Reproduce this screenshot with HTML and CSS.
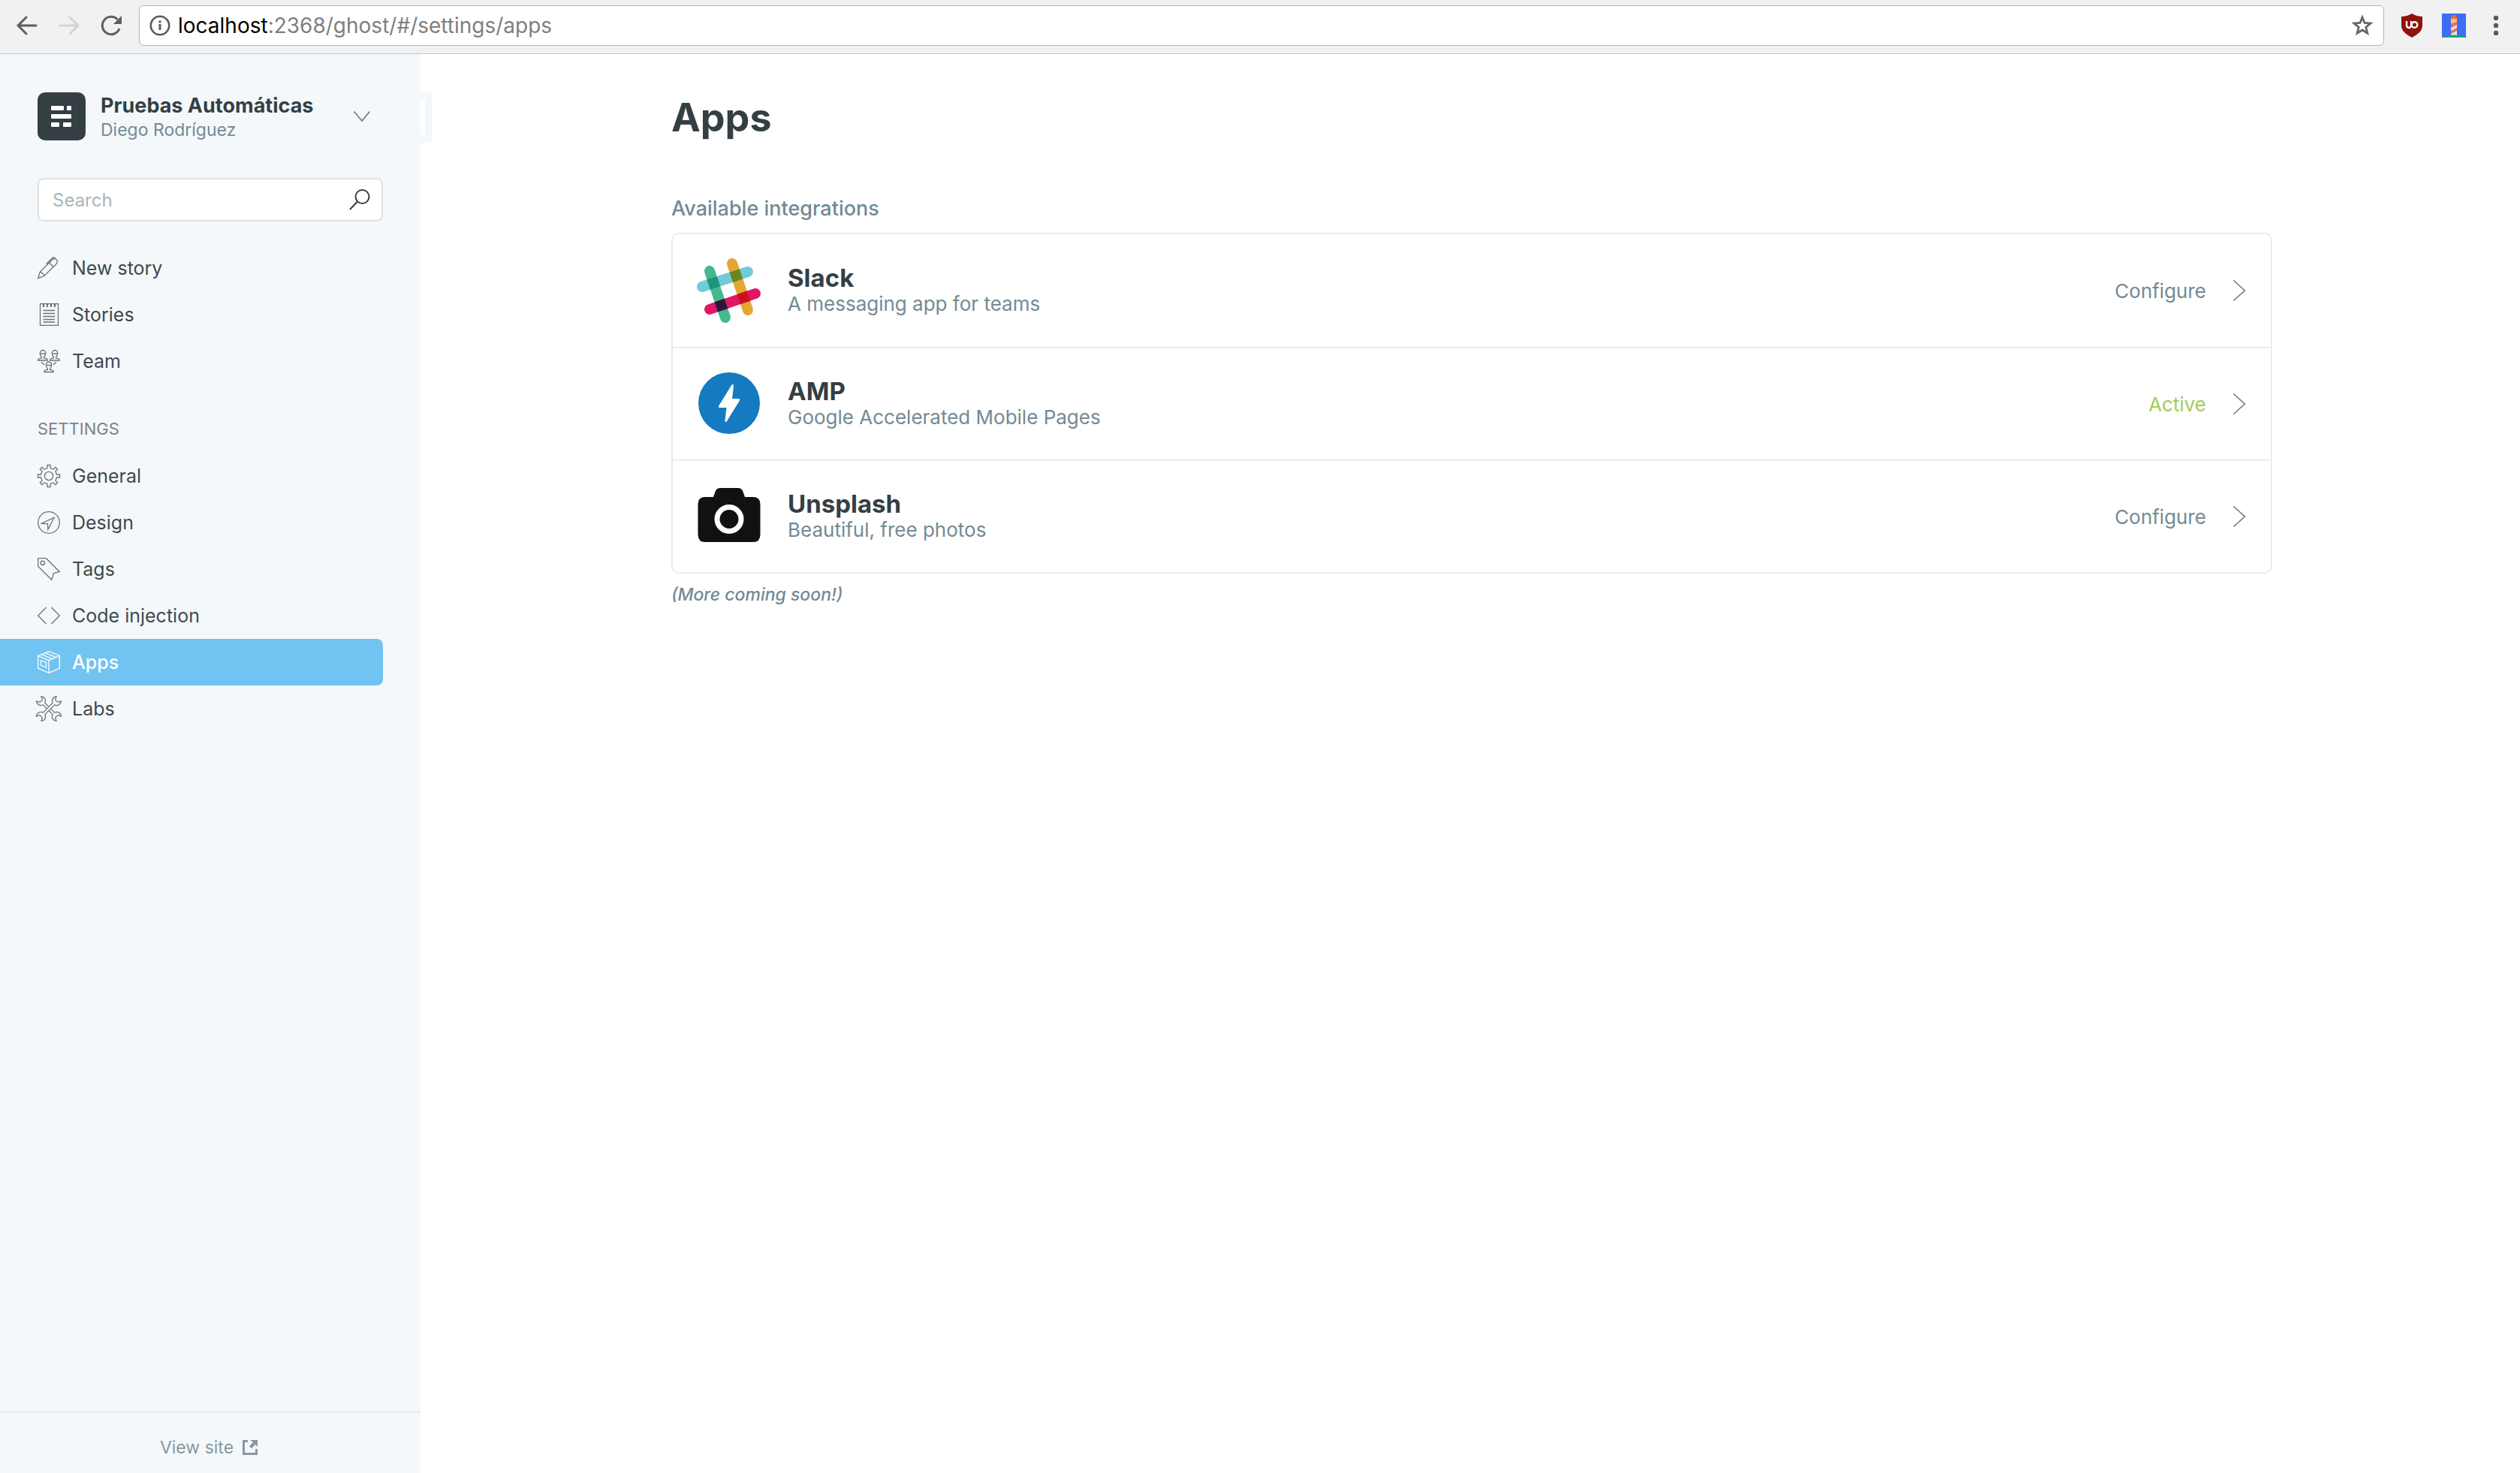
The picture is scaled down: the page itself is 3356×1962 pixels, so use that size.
FILE: index.html
```html
<!DOCTYPE html>
<html lang="en">
<head>
<meta charset="utf-8">
<meta name="viewport" content="width=device-width, initial-scale=1">
<title>Apps - Settings - Pruebas Automáticas</title>
<link rel="stylesheet" href="styles.css">
</head>
<body>
<header class="toolbar">
  <div class="history">
    <button class="tool" type="button" aria-label="Back"><svg width="28" height="28" viewBox="0 0 28 28" class="line-tool"><path d="M26 14H2M13 3 2 14l11 11"/></svg></button>
    <button class="tool" type="button" aria-label="Forward" disabled><svg width="28" height="28" viewBox="0 0 28 28" class="line-tool"><path d="M2 14h24M15 3l11 11-11 11"/></svg></button>
    <button class="tool" type="button" aria-label="Reload"><svg width="28" height="28" viewBox="0 0 28 28"><path d="M25 18A11.700 11.700 0 1 1 22.500 6" fill="none" stroke="#5f5f5f" stroke-width="3"/><path d="M28 1v11H17z" fill="#5f5f5f"/></svg></button>
  </div>
  <div class="address">
    <svg width="28" height="28" viewBox="0 0 28 28"><circle cx="14" cy="14" r="12.200" fill="none" stroke="#5a5a5a" stroke-width="2.600"/><path d="M12.500 12h3v8h-3zM12.500 7.500h3v3h-3z" fill="#5a5a5a"/></svg>
    <div class="url"><span class="host">localhost</span>:2368/ghost/#/settings/apps</div>
    <button class="tool" type="button" aria-label="Bookmark this page"><svg width="30" height="30" viewBox="0 0 30 30"><path d="M15 4l3 7.500 8 .6-6.200 5.200 2 8L15 21l-6.800 4.300 2-8L4 12.100l8-.6z" fill="none" stroke="#666" stroke-width="2.800"/></svg></button>
  </div>
  <div class="extensions">
    <button class="tool" type="button" aria-label="uBlock Origin"><svg width="28" height="32" viewBox="0 0 28 32"><path d="M14 0q6 4 14 4v12c0 8-7 12-14 16C7 28 0 24 0 16V4q8 0 14-4z" fill="#8f120b"/><path d="M7 10v6a3 3 0 0 0 6 0v-6" fill="none" stroke="#fff" stroke-width="2.400"/><circle cx="17.500" cy="15" r="3.800" fill="none" stroke="#fff" stroke-width="2.400"/></svg></button>
    <button class="tool" type="button" aria-label="Lighthouse"><svg width="32" height="32" viewBox="0 0 32 32"><path d="M0 0h32v32H0z" fill="#3d6df5"/><path d="M12 9h8v20h-8z" fill="#dcdff0"/><path d="M12 7q0-5 4-5t4 5z" fill="#ee6a3a"/><path d="M12 7h8v4h-8z" fill="#ffc04d"/><path d="M12 13l8-2v4l-8 4zM12 23l8-4v4l-8 4z" fill="#f0704a"/><path d="M0 32q16-7 32 0z" fill="#17a765"/></svg></button>
    <button class="tool menu" type="button" aria-label="Menu"><svg width="8" height="32" viewBox="0 0 8 32" fill="#5a5a5a"><circle cx="4" cy="6" r="3.200"/><circle cx="4" cy="16" r="3.200"/><circle cx="4" cy="26" r="3.200"/></svg></button>
  </div>
</header>

<div class="app">
  <nav class="sidebar" aria-label="Main">
    <button class="brand" type="button">
      <svg width="64" height="64" viewBox="0 0 64 64"><rect width="64" height="64" rx="10" fill="#343f44"/><g fill="#fff"><rect x="18" y="18" width="17" height="6" rx="1"/><rect x="39" y="18" width="6" height="6" rx="1"/><rect x="18" y="29" width="27" height="6" rx="1"/><rect x="18" y="40" width="11" height="6" rx="1"/><rect x="34" y="40" width="11" height="6" rx="1"/></g></svg>
      <span class="brand-text"><span class="brand-title">Pruebas Automáticas</span><span class="brand-user">Diego Rodríguez</span></span>
      <svg width="22" height="14" viewBox="0 0 22 14" class="thin"><path d="M.5.500 11 13 21.500.500"/></svg>
    </button>

    <div class="search">
      <input type="search" placeholder="Search" aria-label="Search">
      <svg width="28" height="28" viewBox="0 0 28 28" fill="none" stroke="#343f44" stroke-width="2"><circle cx="17.500" cy="10" r="9"/><path d="M11 16.500 1 27"/></svg>
    </div>

    <ul class="menu-list">
      <li><a href="#/editor"><svg class="icon" width="30" height="30" viewBox="0 0 30 30"><path d="M.7 28.700 3.200 20.300 18.500 5Q22.500 1 25.200 3.800T24.500 10L9 25.500zM3.200 20.300Q7.500 21 9 25.500M15.500 8l5.800 5.500M11.500 9.800 19.500 1.700Q21.500 0 24 2.500"/></svg>New story</a></li>
      <li><a href="#/stories"><svg class="icon" width="30" height="30" viewBox="0 0 30 30"><path d="M3.500.600h24v28.800h-24zM7.500 9.500h15.500M7.500 13.500h15.500M7.500 17.500h15.500M7.500 21.500h15.500M7.500 25h15.500"/><path d="M8 1v4M13 1v4M18 1v4M23 1v4" stroke-width="2.200"/></svg>Stories</a></li>
      <li><a href="#/team"><svg class="icon" width="30" height="30" viewBox="0 0 30 30"><defs><g id="person"><path d="M-3.700 4a3.700 4 0 1 1 7.400 0c0 2-1 4-2 4.600v1.900q5 .5 4.700 3H-6.400q-.3-2.500 4.700-3V8.600C-2.700 8-3.700 6-3.700 4zM-3.500 4.200q4 1 7 0"/></g></defs><use href="#person" x="7" y=".5"/><use href="#person" x="23" y=".5"/><use href="#person" x="15" y="16"/><path d="M5 16l4 4M25 16l-4 4"/></svg>Team</a></li>
    </ul>

    <h2 class="menu-heading">SETTINGS</h2>
    <ul class="menu-list">
      <li><a href="#/settings/general"><svg class="icon" width="30" height="30" viewBox="0 0 30 30"><g transform="translate(15 15)"><path d="M-2-10.500v-4h4v4l4.400 1.600 2.500-2.800 2.800 2.800-2.800 2.500L10.500-2h4v4h-4L8.900 6.400l2.800 2.500-2.800 2.800-2.500-2.800L2 10.500v4h-4v-4l-4.400-1.600-2.500 2.800-2.800-2.800 2.800-2.500L-10.500 2h-4v-4h4l1.600-4.400-2.800-2.500 2.800-2.800 2.500 2.800z"/><circle r="5.700"/></g></svg>General</a></li>
      <li><a href="#/settings/design"><svg class="icon" width="30" height="30" viewBox="0 0 30 30"><circle cx="15" cy="15" r="14.300"/><path d="M22 8.500 13.800 24.500l-.3-7.700-8-.6z"/></svg>Design</a></li>
      <li><a href="#/settings/tags"><svg class="icon" width="30" height="30" viewBox="0 0 30 30"><path d="M.7.700H11.500L29.300 18.500 21.500 20.500 18.700 29.300.7 11.300z"/><circle cx="6.800" cy="6.800" r="2.700"/></svg>Tags</a></li>
      <li><a href="#/settings/code-injection"><svg class="icon" width="30" height="30" viewBox="0 0 30 30"><path d="M11.500 4 .7 15l10.800 11M18.500 4l10.800 11-10.800 11"/></svg>Code injection</a></li>
      <li><a class="active" href="#/settings/apps" aria-current="page"><svg class="icon" width="30" height="30" viewBox="0 0 30 30"><path d="M15 .7 29.300 6.500V23L15 29.300.7 23V6.500zM.7 6.500 15 12.700 29.300 6.500M15 12.700V29.300M10.500 2.700l14 6M5.500 4.700l14 6M4.500 12.500l7 3v6.500l-7-3z"/></svg>Apps</a></li>
      <li><a href="#/settings/labs"><svg class="icon" width="30" height="30" viewBox="0 0 30 30"><defs><path id="wrench" d="M-9-1.800C-10.500-6-15-7.500-18.800-4.500L-14.500-2.300V2.300L-18.800 4.500C-15 7.500-10.500 6-9 1.800H9C10.500 6 15 7.500 18.800 4.500L14.500 2.300V-2.300L18.800-4.500C15-7.500 10.500-6 9-1.800z" fill="#f4f8fb"/></defs><use href="#wrench" transform="translate(15 15) rotate(45)"/><use href="#wrench" transform="translate(15 15) rotate(-45)"/></svg>Labs</a></li>
    </ul>

    <footer class="sidebar-footer">
      <a href="#/site">View site <svg width="20" height="20" viewBox="0 0 20 20" fill="#8799a0"><path d="M0 0h7v3H3v14h14v-5h3v8H0z"/><path d="M10 0h10v9l-3-3-5 5.500L9 8.500 14 3z"/></svg></a>
    </footer>
    <button class="collapse" type="button" aria-label="Collapse menu"></button>
  </nav>

  <main class="content">
    <h1>Apps</h1>
    <h2 class="list-heading">Available integrations</h2>
    <ul class="apps">
      <li><a href="#/settings/apps/slack">
        <svg width="86" height="86" viewBox="0 0 86 86"><g stroke-width="14" stroke-linecap="round"><path d="M7 38 68 18" stroke="#70cadb"/><path d="M47 7 68 69" stroke="#e3a734"/><path d="M17 68 78 47" stroke="#e01765"/><path d="M17 17 38 79" stroke="#47b78f"/></g><g><rect x="-7" y="-7" width="14" height="14" fill="#1f937c" transform="translate(22.300 33) rotate(-18.500)"/><rect x="-7" y="-7" width="14" height="14" fill="#6a8522" transform="translate(52.400 23.200) rotate(-18.500)"/><rect x="-7" y="-7" width="14" height="14" fill="#331239" transform="translate(32.400 62.700) rotate(-18.500)"/><rect x="-7" y="-7" width="14" height="14" fill="#cb121c" transform="translate(62.300 52.400) rotate(-18.500)"/></g></svg>
        <span class="app-text"><strong>Slack</strong><span>A messaging app for teams</span></span>
        <span class="status">Configure</span>
        <svg class="thin" width="16" height="28" viewBox="0 0 16 28"><path d="M.5.500 15.500 14 .5 27.500"/></svg>
      </a></li>
      <li><a href="#/settings/apps/amp">
        <svg width="86" height="86" viewBox="0 0 86 86"><circle cx="43" cy="42" r="41" fill="#167ac0"/><path d="M46.500 17.500 29.300 45.500q-1.300 2.500 1.500 2.500H39.500L37.500 65.500q.3 3 2.300.7L57 38.500q1-2.500-1.500-2.500H47L49 19q-.3-3-2.500-1.500z" fill="#fff"/></svg>
        <span class="app-text"><strong>AMP</strong><span>Google Accelerated Mobile Pages</span></span>
        <span class="status on">Active</span>
        <svg class="thin" width="16" height="28" viewBox="0 0 16 28"><path d="M.5.500 15.500 14 .5 27.500"/></svg>
      </a></li>
      <li><a href="#/settings/apps/unsplash">
        <svg width="86" height="86" viewBox="0 0 86 86"><path d="M11 17H22l2.500-7q1.500-5 7-5h23q5.500 0 7 5L64 17H75q9.500 0 9.500 9.500V67q0 10-9.500 10H11q-9.500 0-9.500-10V26.500Q1.500 17 11 17z" fill="#111"/><circle cx="43" cy="46.500" r="16" fill="none" stroke="#fff" stroke-width="7"/></svg>
        <span class="app-text"><strong>Unsplash</strong><span>Beautiful, free photos</span></span>
        <span class="status">Configure</span>
        <svg class="thin" width="16" height="28" viewBox="0 0 16 28"><path d="M.5.500 15.500 14 .5 27.500"/></svg>
      </a></li>
    </ul>
    <p class="note">(More coming soon!)</p>
  </main>
</div>
</body>
</html>
```
FILE: styles.css
```css
*, *::before, *::after { box-sizing: border-box; }

body {
  margin: 0;
  min-height: 100vh;
  display: flex;
  flex-direction: column;
  background: #fff;
  color: #343f44;
  font-family: Inter, "Liberation Sans", sans-serif;
  font-size: 26px;
}

h1, h2, p, ul { margin: 0; padding: 0; }
ul { list-style: none; }
a { color: inherit; text-decoration: none; }
svg { display: block; flex: none; overflow: visible; }
button { padding: 0; border: 0; background: none; font: inherit; color: inherit; text-align: left; }

/* Browser toolbar */
.toolbar {
  display: flex;
  align-items: center;
  height: 72px;
  padding: 0 28px 4px 22px;
  background: #f1f1f1;
  border-bottom: 1px solid #c8c8c8;
}
.history { display: flex; gap: 28px; margin-right: 23px; }
.line-tool { fill: none; stroke: #5f5f5f; stroke-width: 3; stroke-linecap: round; }
.tool:disabled .line-tool { stroke: #d3d3d3; }
.address {
  flex: 1;
  display: flex;
  align-items: center;
  gap: 10px;
  height: 54px;
  padding: 0 13px;
  background: #fff;
  border: 1px solid #b3b3b3;
  border-radius: 6px;
}
.url { flex: 1; font-size: 28px; color: #7f7f7f; }
.host { color: #000; }
.extensions { display: flex; align-items: center; gap: 26px; margin-left: 23px; }
.menu { margin-left: 10px; }

/* Sidebar */
.app { flex: 1; display: flex; }
.sidebar {
  position: relative;
  flex: none;
  width: 560px;
  display: flex;
  flex-direction: column;
  padding-top: 50px;
  background: #f4f8fb;
}
.brand { display: flex; align-items: center; gap: 20px; padding: 0 67px 0 50px; }
.brand-text { flex: 1; display: flex; flex-direction: column; padding-top: 2px; }
.brand-title { font-size: 27px; font-weight: 700; line-height: 34px; }
.brand-user { font-size: 23px; line-height: 30px; color: #738a94; }
.thin { fill: none; stroke: #66757c; stroke-width: 1.5; }

.search {
  display: flex;
  align-items: center;
  height: 58px;
  margin: 49px 50px 31px;
  padding: 0 15px 0 18px;
  background: #fff;
  border: 2px solid #dfe1e3;
  border-radius: 8px;
}
.search input {
  flex: 1;
  min-width: 0;
  padding: 0;
  border: 0;
  outline: 0;
  background: none;
  font: inherit;
  font-size: 24px;
  color: #343f44;
}
.search input::placeholder { color: #aab5ba; opacity: 1; }

.menu-list a {
  display: flex;
  align-items: center;
  gap: 16px;
  height: 62px;
  margin-right: 50px;
  padding-left: 50px;
  border-radius: 0 8px 8px 0;
  font-size: 25px;
  color: #3f4a4f;
}
.icon { fill: none; stroke: #6b7276; stroke-width: 1.3; }
.menu-list .active { background: #71c3f2; color: #fff; font-weight: 500; }
.active .icon { stroke: #fff; }
.menu-heading {
  padding: 44px 50px 17px;
  font-size: 22px;
  font-weight: 400;
  line-height: 30px;
  color: #808284;
}
.sidebar-footer {
  display: flex;
  justify-content: center;
  align-items: center;
  height: 82px;
  margin-top: auto;
  padding: 12px 4px 0 0;
  border-top: 2px solid #e5ecf0;
  font-size: 23px;
  color: #8799a0;
}
.sidebar-footer a { display: flex; align-items: center; gap: 12px; }
.collapse {
  position: absolute;
  top: 50px;
  left: 100%;
  width: 16px;
  height: 68px;
  border: solid #f4f8fb;
  border-width: 10px 10px 10px 0;
  border-radius: 0 8px 8px 0;
  background: #fff;
}

/* Apps screen */
.content { flex: 1; min-width: 0; padding: 53px 330px 53px 334px; }
h1 { font-size: 52px; font-weight: 700; line-height: 64px; }
.list-heading {
  margin: 73px 0 16px;
  font-size: 27px;
  font-weight: 500;
  line-height: 32px;
  color: #738a94;
}
.apps { border: 2px solid #e6edf2; border-radius: 10px; }
.apps li + li { border-top: 2px solid #e6edf2; }
.apps li { height: 150px; }
.apps a { display: flex; align-items: center; height: 100%; padding: 0 34px 0 32px; }
.app-text { flex: 1; display: flex; flex-direction: column; margin-left: 35px; line-height: 34px; color: #738a94; }
.app-text strong { font-size: 33px; font-weight: 700; line-height: 36px; color: #343f44; }
.status { margin-right: 36px; color: #738a94; }
.status.on { color: #a4cb55; }
.note { margin-top: 12px; font-size: 23px; font-style: italic; font-weight: 500; line-height: 32px; color: #738a94; }
```
